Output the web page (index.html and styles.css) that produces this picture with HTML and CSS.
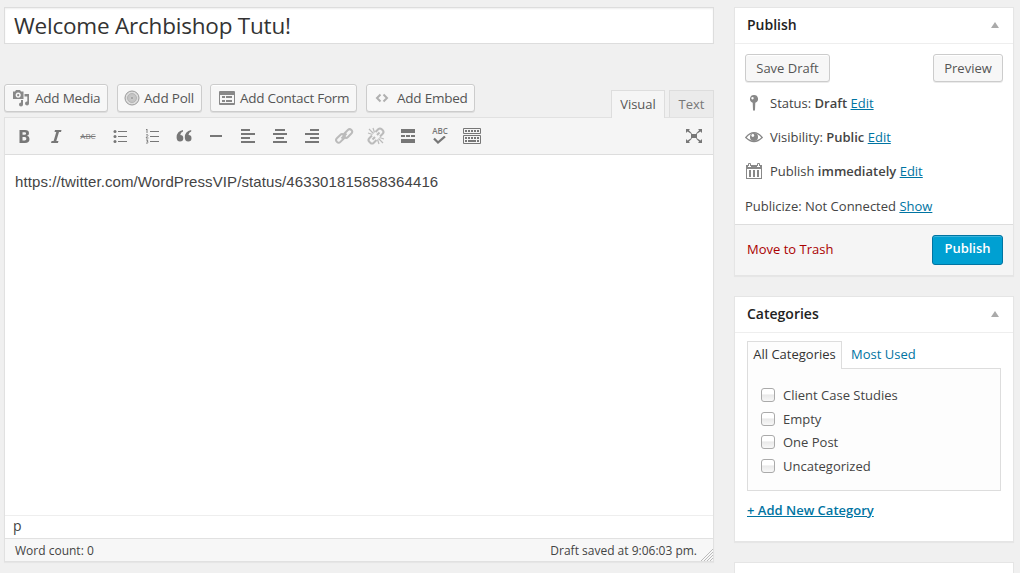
FILE: index.html
```html
<!DOCTYPE html>
<html lang="en">
<head>
<meta charset="utf-8">
<title>Edit Post</title>
<link rel="stylesheet" href="styles.css">
</head>
<body>
<div class="page">
  <main class="main">
    <div class="title-box">Welcome Archbishop Tutu!</div>
    <div class="tools">
      <div class="media">
        <button class="button media-button b-media"><svg width="18" height="18" viewBox="0 0 18 18" fill="#888"><path fill-rule="evenodd" d="M1 2.500h2L4 1h4l1 1.500h2.500V10H1zM6.200 3.500a2.600 2.600 0 1 0 .01 0zM6.200 5a1.100 1.100 0 1 1-.01 0z"/><path d="M12.500 5H17v9.500a2 2 0 1 1-1.700-2V7.500h-2.800z"/><path d="M9 11h2v4.500a2 2 0 1 1-2-2z"/></svg><span>Add Media</span></button>
        <button class="button media-button b-poll"><svg width="16" height="16" viewBox="0 0 16 16"><circle cx="8" cy="8" r="7" fill="#ddd" stroke="#999"/><circle cx="8" cy="8" r="4.500" fill="#c4c4c4" stroke="#b5b5b5"/><circle cx="8" cy="8" r="1.800" fill="#a5a5a5" stroke="#ccc"/></svg><span>Add Poll</span></button>
        <button class="button media-button b-form"><svg width="16" height="14" viewBox="0 0 16 14"><rect width="16" height="14" rx="1" fill="#888"/><path fill="#f7f7f7" d="M1 4h14v9H1z"/><path fill="#888" d="M1 3h14v1H1zM3 5h3v2H3zM7 5h6v2H7zM3 9h3v2H3zM7 9h6v2H7zM1 12h14v1H1z"/></svg><span>Add Contact Form</span></button>
        <button class="button media-button b-embed"><svg width="14" height="10" viewBox="0 0 14 10" fill="none" stroke="#b0b0b0" stroke-width="2"><path d="M5.500 1.500 2 5l3.500 3.500M8.500 1.500 12 5 8.500 8.500"/></svg><span>Add Embed</span></button>
      </div>
      <div class="tabs"><span class="tab active">Visual</span><span class="tab">Text</span></div>
    </div>
    <section class="editor">
      <div class="toolbar">
        <svg viewBox="0 0 20 20"><path fill-rule="evenodd" d="M5.500 4H11q4 0 4 3.200 0 2-2 2.600 2.500.6 2.500 3.100 0 4.100-4.500 4.100H5.500zM8.500 6.300v2.500h2q1.600 0 1.600-1.300T10.500 6.300zM8.500 11v3.500h2.200q1.700 0 1.700-1.800T10.700 11z"/></svg>
        <svg viewBox="0 0 20 20"><path d="M9 4h6.500l-.5 2h-2l-2.700 9h2.200l-.6 2H5l.6-2h2l2.700-9H8.500z"/></svg>
        <span class="strike">ABC</span>
        <svg viewBox="0 0 20 20"><path d="M8 5h9v1H8zM8 10h9v1H8zM8 15h9v1H8z"/><circle cx="5" cy="5.500" r="1.500"/><circle cx="5" cy="10.500" r="1.500"/><circle cx="5" cy="15.500" r="1.500"/></svg>
        <svg viewBox="0 0 20 20"><path d="M8 5h9v1H8zM8 10h9v1H8zM8 15h9v1H8z"/><path fill="none" stroke="#777" stroke-width=".9" d="M4 4l1-1v4M4 9q2-1 2 .3L4 12h2.500M4 14h2l-1 1.300q1.500 0 1 1.300-.5.900-2 .4"/></svg>
        <svg viewBox="0 0 20 20"><path d="M9 5.500Q6.500 6.300 6.300 9 9.300 9 9.300 12.300q0 3.200-3.300 3.200-3.400 0-3.400-4.200Q2.600 5.500 9 4zM17.200 5.500q-2.500.8-2.700 3.500 3 0 3 3.300 0 3.200-3.300 3.200-3.400 0-3.400-4.200 0-5.800 6.400-7.300z"/></svg>
        <svg viewBox="0 0 20 20"><path d="M4 9h12v2H4z"/></svg>
        <svg viewBox="0 0 20 20"><path d="M3 3h9v2H3zM3 7h14v2H3zM3 11h9v2H3zM3 15h14v2H3z"/></svg>
        <svg viewBox="0 0 20 20"><path d="M5 3h10v2H5zM3 7h14v2H3zM6 11h8v2H6zM3 15h14v2H3z"/></svg>
        <svg viewBox="0 0 20 20"><path d="M8 3h9v2H8zM3 7h14v2H3zM8 11h9v2H8zM3 15h14v2H3z"/></svg>
        <svg viewBox="0 0 20 20"><g class="link-lines"><rect x="1.500" y="10" width="9.800" height="5" rx="2.500" transform="rotate(-45 6.250 12.500)"/><rect x="9" y="5" width="9.800" height="5" rx="2.500" transform="rotate(-45 13.900 7.500)"/><path d="m7.500 12.500 5-5"/></g></svg>
        <svg viewBox="0 0 20 20"><g class="link-lines"><path d="M6 9.500 3.300 12.200a2.500 2.500 0 0 0 0 3.500l1 1a2.500 2.500 0 0 0 3.500 0L10.500 14M9.500 6l2.700-2.700a2.500 2.500 0 0 1 3.500 0l1 1a2.500 2.500 0 0 1 0 3.500L14 10.500M6.500 13.500l2.500-2.500M11 9l2.500-2.500"/><path stroke-width="1.200" d="m3 3 4.500 4.500M7 2l1.500 4.500M2 7l4.500 1.500M17 17l-4.500-4.500M13 18l-1.500-4.500M18 13l-4.500-1.500"/></g></svg>
        <svg viewBox="0 0 20 20"><path d="M3 3h14v4H3zM3 9h4v2H3zM8 9h4v2H8zM13 9h4v2h-4zM3 13h14v4H3z"/></svg>
        <span class="spell">ABC<svg viewBox="0 0 14 9"><path fill="none" stroke="#777" stroke-width="2.300" d="m1 2.500 4 4 7-6"/></svg></span>
        <svg viewBox="0 0 20 20"><path fill="none" stroke="#777" d="M1.500 2.500h17v5h-17zM1.500 9.500h17v8h-17z"/><path d="M3 4h2v2H3zM6 4h2v2H6zM9 4h2v2H9zM12 4h2v2h-2zM15 4h2v2h-2zM3 11h2v2H3zM6 11h2v2H6zM9 11h2v2H9zM12 11h2v2h-2zM15 11h2v2h-2zM3 14h2v2H3zM6 14h8v2H6zM15 14h2v2h-2z"/></svg>
        <svg class="expand" viewBox="0 0 20 20"><path d="M7 8h6v4H7zM2 3h4L4.800 4.300 8 7.500l-.5.500L3.500 5.500 2 7zM18 3h-4l1.200 1.300L12 7.500l.5.500 4-2.500L18 7zM2 17h4l-1.200-1.300L8 12.500l-.5-.5-4 2.500L2 13zM18 17h-4l1.200-1.300-3.200-3.200.5-.5 4 2.500L18 13z"/></svg>
      </div>
      <div class="content">https://twitter.com/WordPressVIP/status/463301815858364416</div>
      <div class="path">p</div>
      <div class="status"><span>Word count: 0</span><span class="saved">Draft saved at 9:06:03 pm.</span><svg class="grip" width="12" height="12" viewBox="0 0 12 12"><path fill="none" stroke="#bbb" d="M0 12 12 0M3 12l9-9M6 12l6-6M9 12l3-3"/></svg></div>
    </section>
  </main>
  <aside class="side">
    <section class="panel publish">
      <h3>Publish<i class="arrow"></i></h3>
      <div class="actions"><button class="button save">Save Draft</button><button class="button preview">Preview</button></div>
      <div class="row"><svg width="18" height="18" viewBox="0 0 18 18" fill="#888"><path fill-rule="evenodd" d="M9 1a4 4 0 0 1 1.300 7.800L10 16l-1 1-1-1-.3-7.200A4 4 0 0 1 9 1zM7.500 3a1.200 1.200 0 1 0 .01 0z"/></svg><span>Status: <b>Draft</b> <a>Edit</a></span></div>
      <div class="row"><svg width="18" height="18" viewBox="0 0 18 18"><path fill="none" stroke="#888" stroke-width="1.300" d="M.8 9.500Q9-.2 17.200 9.500 9 17.500.8 9.500z"/><circle cx="9" cy="9" r="4" fill="#888"/><circle cx="7.800" cy="7.500" r="1.400" fill="#fff"/></svg><span>Visibility: <b>Public</b> <a>Edit</a></span></div>
      <div class="row"><svg width="18" height="18" viewBox="0 0 18 18"><path fill="#888" fill-rule="evenodd" d="M1 3h2v2h3V3h6v2h3V3h2v14H1zM2 7v9h14V7z"/><path fill="none" stroke="#888" d="M3.500 4V1.500h2V4M12.500 4V1.500h2V4"/><path fill="#888" d="M4 8h2v7H4zM8 8h2v7H8zM12 8h2v7h-2z"/></svg><span>Publish <b>immediately</b> <a>Edit</a></span></div>
      <div class="row last">Publicize: Not Connected&nbsp;<a>Show</a></div>
      <div class="submit"><span class="trash">Move to Trash</span><button class="primary">Publish</button></div>
    </section>
    <section class="panel categories">
      <h3>Categories<i class="arrow"></i></h3>
      <div class="cat-tabs"><span class="cat-active">All Categories</span><span class="most">Most Used</span></div>
      <div class="cat-list">
        <label><input type="checkbox">Client Case Studies</label>
        <label><input type="checkbox">Empty</label>
        <label><input type="checkbox">One Post</label>
        <label><input type="checkbox">Uncategorized</label>
      </div>
      <a class="add-category">+ Add New Category</a>
    </section>
    <section class="panel next"></section>
  </aside>
</div>
</body>
</html>
```
FILE: styles.css
```css
* { box-sizing: border-box; }
body { margin: 0; background: #f0f0f0; color: #444; font: 13px/18px "Open Sans", sans-serif; }
button { font: inherit; padding: 0; }
.page { display: flex; gap: 20px; height: 573px; padding: 7px 6px 0 4px; }
.main { width: 710px; }
.title-box { height: 37px; padding: 0 9px; border: 1px solid #ddd; background: #fff; box-shadow: inset 0 1px 2px rgba(0,0,0,.07); color: #333; font-size: 22.500px; line-height: 35px; letter-spacing: -.21px; }
.tools { display: flex; justify-content: space-between; height: 73px; padding-top: 40px; }
.media { display: flex; }
.button { height: 28px; border: 1px solid #ccc; border-radius: 3px; background: #f7f7f7; box-shadow: inset 0 1px 0 #fff, 0 1px 0 rgba(0,0,0,.08); color: #555; line-height: 26px; white-space: nowrap; }
.media-button { display: flex; align-items: center; font-size: 13.500px; letter-spacing: -.23px; }
.b-media { width: 104px; padding-left: 7px; gap: 5px; margin-right: 9px; }
.b-poll { width: 85px; padding-left: 6px; gap: 4px; margin-right: 8px; letter-spacing: -.2px; }
.b-form { width: 147px; padding-left: 8px; gap: 5px; margin-right: 9px; letter-spacing: -.28px; }
.b-embed { width: 109px; padding-left: 8px; gap: 8px; }
.tabs { display: flex; gap: 4px; padding-top: 6px; }
.tab { height: 27px; width: 45px; border: 1px solid #ddd; border-bottom: 0; background: #ebebeb; color: #777; line-height: 27px; text-align: center; }
.tab.active { width: 54px; height: 28px; background: #f5f5f5; color: #555; z-index: 1; }
.editor { height: 445px; display: flex; flex-direction: column; border: 1px solid #e1e1e1; background: #fff; box-shadow: 0 1px 1px rgba(0,0,0,.04); }
.toolbar { height: 37px; display: flex; align-items: center; gap: 12px; padding: 0 9px; border-bottom: 1px solid #ddd; background: #f5f5f5; }
.toolbar > svg { width: 20px; height: 20px; flex: none; fill: #777; }
.toolbar .expand { margin-left: auto; }
.link-lines { fill: none; stroke: #bbb; stroke-width: 2; }
.strike, .spell { width: 20px; font-size: 8px; color: #777; text-align: center; }
.strike { text-decoration: line-through; }
.spell { height: 20px; line-height: 10px; font-weight: 600; }
.spell svg { display: block; width: 14px; height: 9px; margin-left: 3px; }
.content { flex: 1; padding: 17px 10px; color: #444; font: 15px/20px "Liberation Sans", sans-serif; letter-spacing: .1px; }
.path { height: 23px; border-top: 1px solid #eee; padding-left: 8px; font-size: 14px; line-height: 20px; }
.status { height: 23px; display: flex; align-items: center; border-top: 1px solid #e1e1e1; padding-left: 10px; background: #f7f7f7; font-size: 12px; }
.status span { padding-top: 2px; }
.saved { margin-left: auto; margin-right: 4px; }
.grip { align-self: flex-end; }
.side { width: 280px; }
.panel { border: 1px solid #e5e5e5; background: #fff; box-shadow: 0 1px 1px rgba(0,0,0,.04); margin-bottom: 20px; }
h3 { display: flex; align-items: center; justify-content: space-between; height: 36px; margin: 0; padding: 0 14px 1px 12px; border-bottom: 1px solid #eee; color: #222; font-size: 14px; font-weight: 600; }
.arrow { border: 4px solid transparent; border-top: 0; border-bottom: 6px solid #aaa; }
.publish { height: 269px; }
.actions { display: flex; justify-content: space-between; height: 42px; padding: 10px 10px 0; }
.save { width: 85px; }
.preview { width: 70px; }
.row { display: flex; align-items: center; height: 34px; padding-left: 10px; gap: 7px; }
.row.last { height: 36px; padding-bottom: 1px; gap: 0; }
b { font-weight: 600; }
a { color: #0074a2; text-decoration: underline; }
.submit { display: flex; align-items: center; justify-content: space-between; height: 51px; padding: 0 10px 0 12px; border-top: 1px solid #ddd; background: #f5f5f5; }
.trash { color: #a00; padding-bottom: 3px; }
.primary { width: 71px; height: 30px; border: 1px solid #0074a2; border-radius: 3px; background: #00a0d2; box-shadow: inset 0 1px 0 rgba(120,200,230,.5); color: #fff; font-weight: 600; line-height: 25px; padding-bottom: 3px; }
.categories { height: 246px; }
.cat-tabs { display: flex; padding: 8px 12px 0; }
.cat-active { width: 95px; height: 28px; margin-bottom: -1px; border: 1px solid #ddd; border-bottom: 0; background: #fdfdfd; color: #333; line-height: 25px; text-align: center; z-index: 1; }
.most { margin-left: 9px; line-height: 27px; color: #0074a2; }
.cat-list { height: 123px; margin: 0 12px; padding: 14px 13px; border: 1px solid #ddd; background: #fdfdfd; }
.cat-list label { display: flex; align-items: center; gap: 8px; height: 23.700px; }
input { appearance: none; width: 14px; height: 14px; margin: 0; border: 1px solid #aaa; border-radius: 3px; background: linear-gradient(#fff 40%, #e9e9e9 50%, #f8f8f8); }
.add-category { display: block; margin: 10px 12px; font-weight: 600; }
.next { height: 11px; margin-bottom: 0; border-bottom: 0; box-shadow: none; }
```
